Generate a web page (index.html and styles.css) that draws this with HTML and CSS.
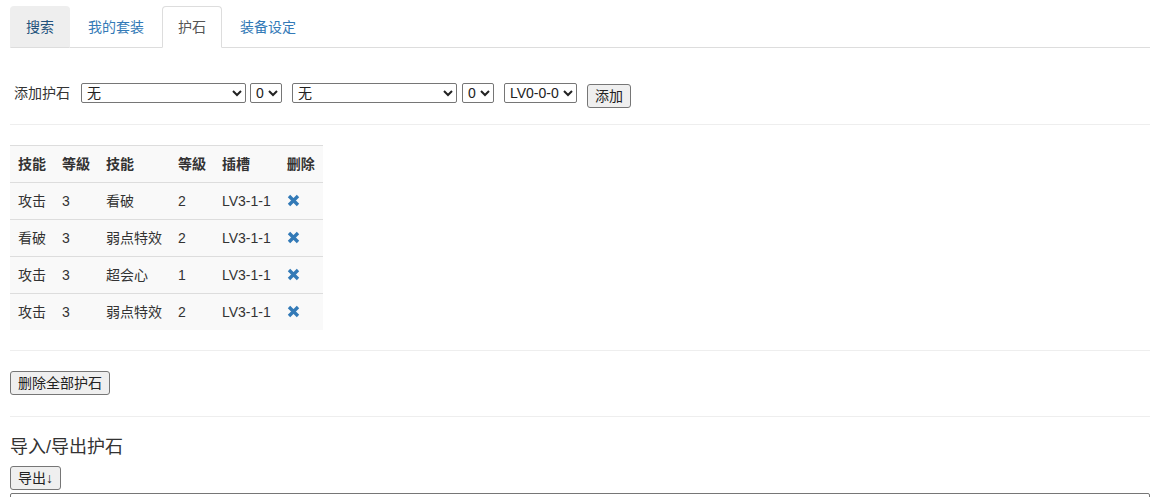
FILE: index.html
```html
<!DOCTYPE html>
<html>
<head>
<meta charset="utf-8">
<link rel="stylesheet" href="styles.css">
</head>
<body>
<div class="container">
  <ul class="nav-tabs">
    <li><a class="tab hover" href="#">搜索</a></li>
    <li><a class="tab" href="#">我的套装</a></li>
    <li><a class="tab active" href="#">护石</a></li>
    <li><a class="tab" href="#">装备设定</a></li>
  </ul>
  <div class="tab-content">
    <div class="add-row">
      <span class="label">添加护石</span>
      <select class="sel sel-skill"><option>无</option></select>
      <select class="sel sel-lv"><option>0</option></select>
      <select class="sel sel-skill sel-gap"><option>无</option></select>
      <select class="sel sel-lv sel-gap2"><option>0</option></select>
      <select class="sel sel-slot sel-gap"><option>LV0-0-0</option></select>
      <button class="btn btn-add">添加</button>
    </div>
    <hr class="rule rule-first">
    <table class="table">
      <thead>
        <tr><th>技能</th><th>等級</th><th>技能</th><th>等級</th><th>插槽</th><th>删除</th></tr>
      </thead>
      <tbody>
        <tr><td>攻击</td><td>3</td><td>看破</td><td>2</td><td>LV3-1-1</td><td><span class="remove"><svg width="13" height="13" viewBox="0 0 13 13"><path d="M2 2 L11 11 M11 2 L2 11" stroke="#337ab7" stroke-width="3.4" stroke-linecap="butt"/></svg></span></td></tr>
        <tr><td>看破</td><td>3</td><td>弱点特效</td><td>2</td><td>LV3-1-1</td><td><span class="remove"><svg width="13" height="13" viewBox="0 0 13 13"><path d="M2 2 L11 11 M11 2 L2 11" stroke="#337ab7" stroke-width="3.4" stroke-linecap="butt"/></svg></span></td></tr>
        <tr><td>攻击</td><td>3</td><td>超会心</td><td>1</td><td>LV3-1-1</td><td><span class="remove"><svg width="13" height="13" viewBox="0 0 13 13"><path d="M2 2 L11 11 M11 2 L2 11" stroke="#337ab7" stroke-width="3.4" stroke-linecap="butt"/></svg></span></td></tr>
        <tr><td>攻击</td><td>3</td><td>弱点特效</td><td>2</td><td>LV3-1-1</td><td><span class="remove"><svg width="13" height="13" viewBox="0 0 13 13"><path d="M2 2 L11 11 M11 2 L2 11" stroke="#337ab7" stroke-width="3.4" stroke-linecap="butt"/></svg></span></td></tr>
      </tbody>
    </table>
    <hr class="rule">
    <div><button class="btn btn-clear">删除全部护石</button></div>
    <hr class="rule rule-last">
    <h3 class="section-title">导入/导出护石</h3>
    <div><button class="btn btn-export">导出↓</button></div>
    <textarea class="io"></textarea>
  </div>
</div>
</body>
</html>
```
FILE: styles.css
```css
* { box-sizing: border-box; }
html, body {
  margin: 0;
  padding: 0;
  background: #fff;
}
body {
  font-family: "Liberation Sans", "Noto Sans CJK SC", sans-serif;
  font-size: 14px;
  line-height: 20px;
  color: #333;
  overflow: hidden;
}
.container {
  padding: 6px 2px 0 10px;
}
.nav-tabs {
  list-style: none;
  margin: 0;
  padding: 0;
  display: flex;
  border-bottom: 1px solid #ddd;
}
.nav-tabs li {
  margin-bottom: -1px;
}
.tab {
  display: block;
  padding: 10px 15px;
  line-height: 20px;
  margin-right: 2px;
  border: 1px solid transparent;
  border-radius: 4px 4px 0 0;
  color: #337ab7;
  text-decoration: none;
}
.tab.hover {
  background: #eee;
  border-color: #eee #eee #ddd;
  color: #23527c;
}
.tab.active {
  color: #555;
  background: #fff;
  border-color: #ddd #ddd transparent;
}
.add-row {
  margin-top: 35px;
  padding-left: 4px;
  height: 26px;
  display: flex;
  align-items: flex-start;
}
.label {
  line-height: 20px;
  margin-right: 11px;
  margin-top: 0;
  color: #333;
}
.sel {
  height: 20px;
  font-family: "Liberation Sans", "Noto Sans CJK SC", sans-serif;
  font-size: 14px;
  color: #222;
  margin: 0 4px 0 0;
  padding: 0 0 0 1px;
  border: 1px solid #767676;
  border-radius: 2px;
  background: #fff;
}
.sel-skill { width: 165px; }
.sel-lv { width: 32px; }
.sel-slot { width: 73px; }
.sel-gap { margin-left: 6px; }
.sel-gap2 { margin-left: 1px; }
.btn {
  font-family: "Liberation Sans", "Noto Sans CJK SC", sans-serif;
  font-size: 14px;
  line-height: 20px;
  height: 24px;
  padding: 1px 6px;
  color: #222;
  background: #efefef;
  border: 1px solid #767676;
  border-radius: 3px;
}
.btn-add {
  margin-left: 6px;
  margin-top: 1px;
  width: 44px;
}
.btn-clear { width: 100px; padding: 1px 0; }
.btn-export { width: 51px; padding: 1px 0; }
.rule {
  margin: 20px 0;
  border: 0;
  border-top: 1px solid #eee;
  height: 0;
}
.rule-first { margin-top: 15px; }
.rule-last { margin-top: 21px; }
.table {
  border-collapse: collapse;
  background: #f9f9f9;
}
.table th, .table td {
  padding: 8px;
  line-height: 20px;
  text-align: left;
  border-top: 1px solid #ddd;
  white-space: nowrap;
}
.table th { font-weight: bold; }
.remove {
  display: inline-block;
  vertical-align: -1px;
  width: 14px;
}
.remove svg { display: block; }
.section-title {
  font-size: 18px;
  font-weight: normal;
  line-height: 20px;
  margin: 20px 0 9px;
  color: #333;
}
.io {
  display: block;
  margin-top: 3px;
  width: 100%;
  height: 100px;
  border: 1px solid #767676;
  border-radius: 2px;
}
```
